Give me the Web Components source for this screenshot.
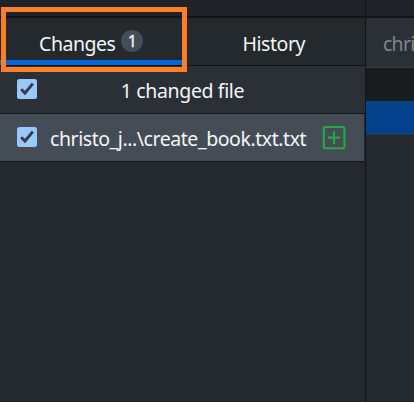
<!DOCTYPE html>
<html lang="en"><head><meta charset="utf-8"><title>Changes</title>
<style>html,body{margin:0;height:100%;overflow:hidden;background:#24292e}body{font:19.5px/27px "Noto Sans","Open Sans",sans-serif;color:#f4f6f8}</style></head>
<body><app-window></app-window>
<script>
const define=(name,html)=>{const t=document.createElement('template');t.innerHTML=html;
customElements.define(name,class extends HTMLElement{constructor(){super();this.attachShadow({mode:'open'}).append(t.content.cloneNode(true));}});};
define('check-box',`<style>:host{display:block;width:20px;height:20px;flex:none}svg{display:block}</style>
<svg width="20" height="20" viewBox="0 0 20 20"><rect width="20" height="20" rx="2.5" fill="#99c8ff"/><path d="M4.2 10.2 L8 14 L15.8 4.6" fill="none" stroke="#3a3a3a" stroke-width="2.9"/></svg>`);
define('added-icon',`<style>:host{display:block;width:24px;height:24px;flex:none}svg{display:block}</style>
<svg width="24" height="24" viewBox="0 0 24 24"><rect x="1.8" y="1" width="20.6" height="21.3" rx="1.2" fill="none" stroke="#28a745" stroke-width="2.1"/><path d="M12 5.2v12.8M5.8 11.6h12.4" stroke="#28a745" stroke-width="2.1"/></svg>`);
define('count-badge',`<style>:host{display:block;width:22px;height:22px;border-radius:50%;background:#444d56;font-size:16px;line-height:22px;text-align:center;-webkit-text-stroke:.3px}</style><slot></slot>`);
define('tab-item',`<style>:host{display:flex;box-sizing:border-box;flex:1;height:47px;padding-top:12px;justify-content:center;align-items:flex-start;gap:6px}
:host([selected]){border-bottom:5px solid #0366d6}span{letter-spacing:var(--track,0)}</style><span><slot></slot></span><slot name="badge"></slot>`);
define('tab-bar',`<style>:host{display:flex;height:47px;border-bottom:1px solid #141414}</style><slot></slot>`);
define('list-row',`<style>:host{display:flex;box-sizing:border-box;height:48px;padding-left:17px;align-items:flex-start;background:#2b3037;border-bottom:1px solid #141414}
:host([selected]){background:#444d56;margin-right:1px}
slot[name=check]{display:block;padding-top:13px}
p{margin:11px 0 0;flex:1;white-space:nowrap;letter-spacing:var(--track,0)}
:host(:not([selected])) p{text-align:center;padding-right:19px}
:host([selected]) p{padding-left:13px}
slot[name=icon]{display:block;padding:12px 18px 0 0}</style><slot name="check"></slot><p><slot></slot></p><slot name="icon"></slot>`);
define('diff-pane',`<style>:host{display:flex;flex-direction:column;flex:1;overflow:hidden}header{height:50px;box-sizing:border-box;padding:12px 0 0 17px;background:#2b3037;color:#7f868e;border-bottom:1px solid #363b41;white-space:nowrap;letter-spacing:var(--track,0)}
.gutter{height:33px;background:#181c1f}.hunk{height:33px;background:#04438c;border-bottom:1px solid #30363d}</style><header><slot></slot></header><div class="gutter"></div><div class="hunk"></div>`);
define('focus-frame',`<style>:host{position:absolute;left:1px;top:7px;width:186px;height:65px;box-sizing:border-box;border:5px solid #ff7f27;pointer-events:none}</style>`);
define('app-window',`<style>:host{display:flex;flex-direction:column;position:relative;height:402px;background:#24292e}
.top{height:16px;display:flex;background:#1f2327;border-bottom:2px solid #141414}.top i{width:365px;border-right:1px solid #141414}
main{flex:1;display:flex}.side{width:365px;border-right:1px solid #141414}.foot{height:1px;background:#201d21}</style>
<div class="top"><i></i></div><main><section class="side">
<tab-bar><tab-item selected style="--track:-.48px">Changes<count-badge slot="badge">1</count-badge></tab-item><tab-item style="--track:-.45px">History</tab-item></tab-bar>
<list-row style="--track:-.37px"><check-box slot="check"></check-box>1 changed file</list-row>
<list-row selected style="--track:-.44px"><check-box slot="check"></check-box>christo_j...\\create_book.txt.txt<added-icon slot="icon"></added-icon></list-row>
</section><diff-pane style="--track:-.75px">chri</diff-pane></main><div class="foot"></div><focus-frame></focus-frame>`);
</script></body></html>
